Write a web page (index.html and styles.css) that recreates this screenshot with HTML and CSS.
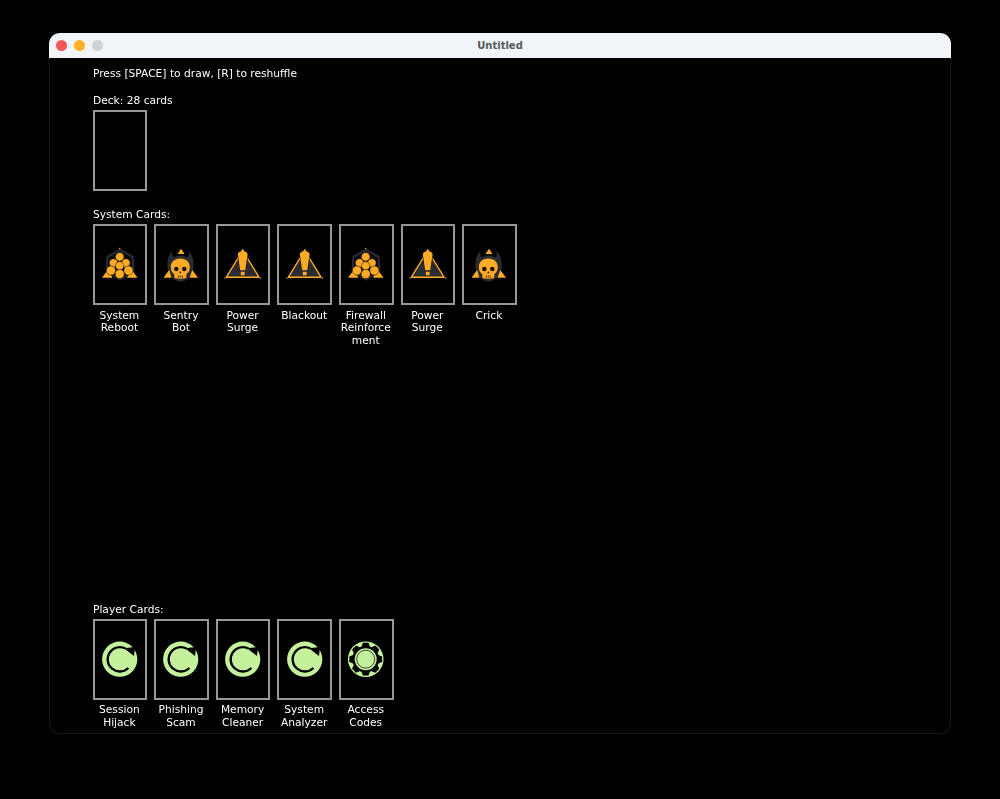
FILE: index.html
```html
<!DOCTYPE html>
<html lang="en">
<head>
<meta charset="utf-8">
<title>Untitled</title>
<link rel="stylesheet" href="styles.css">
</head>
<body>
<svg class="defs" width="0" height="0" aria-hidden="true">
  <defs>
    <g id="cluster">
      <path d="M24 7.800 37.500 15 38.500 31 24 39.800 9.500 31 10.500 15z" fill="#2b2b32"/>
      <path d="M24 10 35.500 16.500 36.500 30 24 37.500 11.500 30 12.500 16.500z" fill="#0b0b0d"/>
      <path d="M6 36.800 12 28.500 16.500 36.800zM41.500 36.800 35.500 28.500 31 36.800z" fill="#ffab24"/>
      <g fill="#ffab24" stroke="#0b0b0d" stroke-width=".5">
        <circle cx="23.700" cy="15.800" r="4.300"/>
        <circle cx="17.500" cy="22" r="4.200"/>
        <circle cx="29.900" cy="22" r="4.200"/>
        <circle cx="23.700" cy="24.800" r="4.200"/>
        <circle cx="15" cy="29.500" r="4.600"/>
        <circle cx="32.400" cy="29.500" r="4.600"/>
        <circle cx="23.700" cy="33" r="4.600"/>
      </g>
      <circle cx="23.700" cy="7.500" r=".7" fill="#ffab24"/>
    </g>
    <g id="skull">
      <path d="M15.500 9.500C11.500 14 10 19 10.500 26c.5 8 6 14.500 13 14.500S36 34 36.500 26c.5-7-1-12-5-16.500.5 3 .5 5-1 7-4-2.500-10-2.500-14 0-1.500-2-1.500-4-1-7z" fill="#2b2b32"/>
      <path d="M24 7.800 27.500 13H20.500z" fill="#ffab24"/>
      <path d="M6.500 36.800 12.200 29 14.500 36.800zM41 36.800 35.300 29 32.500 36.800z" fill="#ffab24"/>
      <path d="M23.300 17.500c6 0 9.500 3.700 9.500 8.800 0 3.300-1.500 5.500-3.500 6.800v3.700c-2.500 1.500-9.500 1.500-12 0v-3.700c-2-1.300-3.500-3.500-3.500-6.800 0-5.100 3.500-8.800 9.500-8.800z" fill="#ffab24"/>
      <circle cx="19.300" cy="28" r="2.300" fill="#1a1208"/>
      <circle cx="27.300" cy="28" r="2.300" fill="#1a1208"/>
      <path d="M23.300 30l1.100 2.300h-2.200z" fill="#1a1208"/>
      <path d="M21.300 34.300v3M23.300 34.300v3M25.300 34.300v3" stroke="#1a1208" stroke-width=".7"/>
    </g>
    <g id="warning">
      <path d="M23.700 9.500 40 36.200H7.400z" fill="#2b2b32" stroke="#ffab24" stroke-width="1.400" stroke-linejoin="round"/>
      <path d="M18.300 14c0-6 10.800-6 10.800 0L26.800 29.500h-6.200z" fill="#111"/>
      <path d="M18.900 13.500c0-4.800 9.600-4.800 9.600 0l-2.200 15.800h-5.200z" fill="#ffab24"/>
      <rect x="21.800" y="30.800" width="3.800" height="3.500" fill="#ffab24"/>
      <path d="M23.700 7.800 25.200 10h-3z" fill="#ffab24"/>
      <circle cx="6" cy="37" r=".7" fill="#ffab24"/>
      <circle cx="41.500" cy="37" r=".7" fill="#ffab24"/>
    </g>
    <g id="reload">
      <circle cx="23.700" cy="24.200" r="17.600" fill="#c4f29c"/>
      <path d="M29.500 13.500A12.200 12.200 0 1 0 32.400 33" fill="none" stroke="#000" stroke-width="2.300"/>
      <path d="M28 13.200 39 12 38 21z" fill="#000"/>
    </g>
    <g id="gear">
      <circle cx="23.700" cy="24.200" r="17.800" fill="#c4f29c"/>
      <g transform="translate(-.3 .2)">
        <circle cx="24" cy="24" r="13.300" fill="#000"/>
        <g fill="#000">
          <path d="M21.200 7.600h5.600l2.400 6.400h-10.400z"/>
          <path d="M21.200 7.600h5.600l2.400 6.400h-10.400z" transform="rotate(45 24 24)"/>
          <path d="M21.200 7.600h5.600l2.400 6.400h-10.400z" transform="rotate(90 24 24)"/>
          <path d="M21.200 7.600h5.600l2.400 6.400h-10.400z" transform="rotate(135 24 24)"/>
          <path d="M21.200 7.600h5.600l2.400 6.400h-10.400z" transform="rotate(180 24 24)"/>
          <path d="M21.200 7.600h5.600l2.400 6.400h-10.400z" transform="rotate(225 24 24)"/>
          <path d="M21.200 7.600h5.600l2.400 6.400h-10.400z" transform="rotate(270 24 24)"/>
          <path d="M21.200 7.600h5.600l2.400 6.400h-10.400z" transform="rotate(315 24 24)"/>
        </g>
        <circle cx="24" cy="24" r="11" fill="#c4f29c"/>
        <circle cx="24" cy="24" r="9" fill="none" stroke="#000" stroke-width=".7"/>
      </g>
    </g>
  </defs>
</svg>
<div class="window">
  <header class="titlebar">
    <span class="light light-red"></span>
    <span class="light light-yellow"></span>
    <span class="light light-grey"></span>
    <span class="title">Untitled</span>
  </header>
  <main class="content">
    <p class="hint">Press [SPACE] to draw, [R] to reshuffle</p>
    <section class="deck">
      <p class="heading">Deck: 28 cards</p>
      <div class="card"></div>
    </section>
    <section class="system">
      <p class="heading">System Cards:</p>
      <div class="row">
        <div class="item"><div class="card"><svg class="icon" viewBox="0 0 48 48"><use href="#cluster"/></svg></div><p class="label">System Reboot</p></div>
        <div class="item"><div class="card"><svg class="icon" viewBox="0 0 48 48"><use href="#skull"/></svg></div><p class="label">Sentry Bot</p></div>
        <div class="item"><div class="card"><svg class="icon" viewBox="0 0 48 48"><use href="#warning"/></svg></div><p class="label">Power Surge</p></div>
        <div class="item"><div class="card"><svg class="icon" viewBox="0 0 48 48"><use href="#warning"/></svg></div><p class="label">Blackout</p></div>
        <div class="item"><div class="card"><svg class="icon" viewBox="0 0 48 48"><use href="#cluster"/></svg></div><p class="label">Firewall Reinforce<br>ment</p></div>
        <div class="item"><div class="card"><svg class="icon" viewBox="0 0 48 48"><use href="#warning"/></svg></div><p class="label">Power Surge</p></div>
        <div class="item"><div class="card"><svg class="icon" viewBox="0 0 48 48"><use href="#skull"/></svg></div><p class="label">Crick</p></div>
      </div>
    </section>
    <section class="player">
      <p class="heading">Player Cards:</p>
      <div class="row">
        <div class="item"><div class="card"><svg class="icon" viewBox="0 0 48 48"><use href="#reload"/></svg></div><p class="label">Session Hijack</p></div>
        <div class="item"><div class="card"><svg class="icon" viewBox="0 0 48 48"><use href="#reload"/></svg></div><p class="label">Phishing Scam</p></div>
        <div class="item"><div class="card"><svg class="icon" viewBox="0 0 48 48"><use href="#reload"/></svg></div><p class="label">Memory Cleaner</p></div>
        <div class="item"><div class="card"><svg class="icon" viewBox="0 0 48 48"><use href="#reload"/></svg></div><p class="label">System Analyzer</p></div>
        <div class="item"><div class="card"><svg class="icon" viewBox="0 0 48 48"><use href="#gear"/></svg></div><p class="label">Access Codes</p></div>
      </div>
    </section>
  </main>
</div>
</body>
</html>
```
FILE: styles.css
```css
* { box-sizing: border-box; }
html, body { height: 100%; }
body {
  margin: 0;
  background: #000;
  font-family: "DejaVu Sans", sans-serif;
  font-size: 10.67px;
  color: #fff;
  overflow: hidden;
  padding: 33px 49px 0;
}
p { margin: 0; }
.defs { position: absolute; }
.window {
  width: 902px;
  height: 701px;
  border: 1px solid #161616;
  border-top: 0;
  border-radius: 11px;
  display: flex;
  flex-direction: column;
  background: #000;
}
.titlebar {
  position: relative;
  height: 25px;
  margin: 0 -1px;
  flex: none;
  background: #f1f4f8;
  border-radius: 11px 11px 0 0;
  display: flex;
  align-items: center;
  gap: 7px;
  padding-left: 6.500px;
}
.light { width: 11px; height: 11px; border-radius: 50%; }
.light-red { background: #f4565a; }
.light-yellow { background: #fdb124; }
.light-grey { background: #ced1d8; }
.title {
  position: absolute;
  left: 0;
  right: 0;
  text-align: center;
  font-weight: 700;
  color: #565a5e;
  font-size: 10px;
}
.content {
  flex: 1;
  display: flex;
  flex-direction: column;
  padding: 9px 0 0 42.600px;
  min-height: 0;
  will-change: transform;
}
.hint, .heading { line-height: 13px; white-space: nowrap; padding-left: .4px; }
.deck { margin-top: 14px; }
.heading { margin-bottom: 3px; }
.system { margin-top: 17px; }
.player { margin-top: auto; }
.row { display: flex; gap: 7px; }
.item { width: 54.600px; flex: none; }
.card {
  width: 54.600px;
  height: 81px;
  border: 2px solid #979797;
  display: flex;
  align-items: center;
  justify-content: center;
}
.icon { width: 48px; height: 48px; flex: none; }
.label {
  margin-top: 4.500px;
  padding-right: 1px;
  text-align: center;
  line-height: 12.500px;
  overflow-wrap: anywhere;
  margin-bottom: 4px;
}
```
